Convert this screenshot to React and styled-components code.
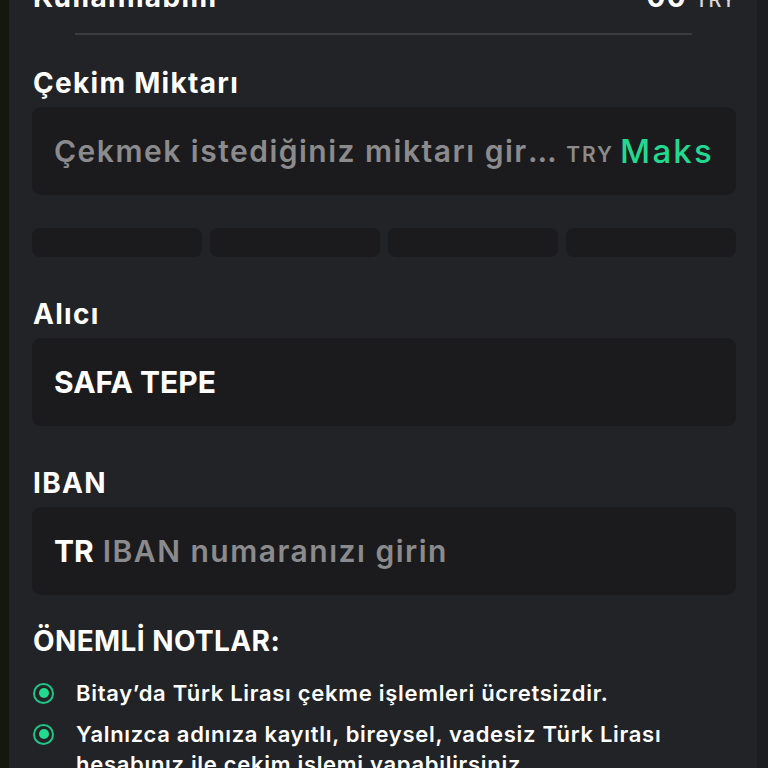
import React from "react";
import styled, { createGlobalStyle } from "styled-components";

const GlobalStyle = createGlobalStyle`
  html, body { margin: 0; padding: 0; background: #1c1d20; }
  body { font-family: Inter, "Noto Sans", sans-serif; overflow: hidden; }
  * { box-sizing: border-box; }
`;

const Page = styled.div`
  display: grid;
  grid-template-columns: 9px minmax(0, 1fr) 11px;
  height: 768px;
  overflow: hidden;
`;

const Rail = styled.div`
  background: ${(p) => p.$color};
`;

const Panel = styled.div`
  min-width: 0;
  background: #222327;
  padding: 0 21px 0 23px;
  display: flex;
  flex-direction: column;
`;

const TopRow = styled.div`
  display: flex;
  justify-content: space-between;
  align-items: baseline;
  margin-top: -21px;
  padding-left: 1px;
  height: 36px;
  line-height: 36px;
  color: #fff;
  font-weight: 700;
  font-size: 28px;
  letter-spacing: 1.4px;
`;

const Small = styled.span`
  font-size: 20px;
  font-weight: 500;
  color: #d8d8da;
  margin-left: 8px;
  letter-spacing: 0.5px;
`;

const Divider = styled.div`
  margin: 18px 44px 0 43px;
  height: 2px;
  background: #3a3b3f;
`;

const Label = styled.div`
  margin-top: ${(p) => p.$mt}px;
  padding-left: 1px;
  height: 36px;
  line-height: 36px;
  font-size: 28px;
  font-weight: 700;
  letter-spacing: ${(p) => p.$ls ?? 1.3}px;
  color: #fff;
`;

const Field = styled.div`
  margin-top: 6px;
  height: 88px;
  min-width: 0;
  background: #1b1b1d;
  border-radius: 9px;
  display: flex;
  align-items: center;
  padding: 0 24px 0 22px;
  gap: 9px;
  font-size: 30px;
  font-weight: 600;
  white-space: nowrap;
  overflow: hidden;
`;

const Text = styled.span`
  color: ${(p) => (p.$muted ? "#8b8b8d" : "#fff")};
  font-weight: ${(p) => (p.$muted ? 600 : 700)};
  letter-spacing: ${(p) => (p.$ls ? `${p.$ls}px` : "0")};
  overflow: hidden;
  text-overflow: ellipsis;
  flex: ${(p) => (p.$grow ? "1 1 0" : "none")};
  min-width: 0;
`;

const Unit = styled.span`
  flex: none;
  font-size: 21px;
  font-weight: 600;
  letter-spacing: 2px;
  color: #8b8b8d;
  padding-top: 6px;
  margin-right: -3px;
`;

const Max = styled.span`
  flex: none;
  color: #22d98f;
  font-size: 33px;
  font-weight: 500;
  letter-spacing: 2.2px;
  margin-right: -2px;
`;

const Chips = styled.div`
  margin-top: 33px;
  display: grid;
  grid-template-columns: repeat(4, minmax(0, 1fr));
  gap: 8px;
`;

const Chip = styled.div`
  height: 29px;
  background: #1b1b1d;
  border-radius: 8px;
`;

const Notes = styled.ul`
  list-style: none;
  margin: 19px 0 0;
  padding: 0 0 0 1px;
  display: flex;
  flex-direction: column;
  gap: 11px;
`;

const Note = styled.li`
  display: flex;
  gap: 22px;
  font-size: 22px;
  font-weight: 600;
  letter-spacing: 0.7px;
  line-height: 30px;
  color: #fff;
`;

const Dot = styled.span`
  flex: none;
  width: 21px;
  height: 21px;
  margin-top: 4.5px;
  border-radius: 50%;
  border: 2.5px solid #1fc487;
  display: flex;
  align-items: center;
  justify-content: center;
  &::after {
    content: "";
    width: 10px;
    height: 10px;
    border-radius: 50%;
    background: #22d98f;
  }
`;

export default function App() {
  return (
    <>
      <GlobalStyle />
      <Page>
        <Rail $color="#16170f" />
        <Panel>
          <TopRow>
            <span>Kullanılabilir</span>
            <span>
              00<Small>TRY</Small>
            </span>
          </TopRow>
          <Divider />
          <Label $mt={30}>Çekim Miktarı</Label>
          <Field>
            <Text $muted $grow $ls={1.5}>
              Çekmek istediğiniz miktarı girin
            </Text>
            <Unit>TRY</Unit>
            <Max>Maks</Max>
          </Field>
          <Chips>
            <Chip />
            <Chip />
            <Chip />
            <Chip />
          </Chips>
          <Label $mt={39}>Alıcı</Label>
          <Field>
            <Text>SAFA TEPE</Text>
          </Field>
          <Label $mt={39}>IBAN</Label>
          <Field>
            <Text>TR</Text>
            <Text $muted $ls={1.5}>
              IBAN numaranızı girin
            </Text>
          </Field>
          <Label $mt={28} $ls={0.4}>
            ÖNEMLİ NOTLAR:
          </Label>
          <Notes>
            <Note>
              <Dot />
              <span>Bitay’da Türk Lirası çekme işlemleri ücretsizdir.</span>
            </Note>
            <Note>
              <Dot />
              <span>
                Yalnızca adınıza kayıtlı, bireysel, vadesiz Türk Lirası
                hesabınız ile çekim işlemi yapabilirsiniz.
              </span>
            </Note>
          </Notes>
        </Panel>
        <Rail $color="#1c1d21" />
      </Page>
    </>
  );
}
